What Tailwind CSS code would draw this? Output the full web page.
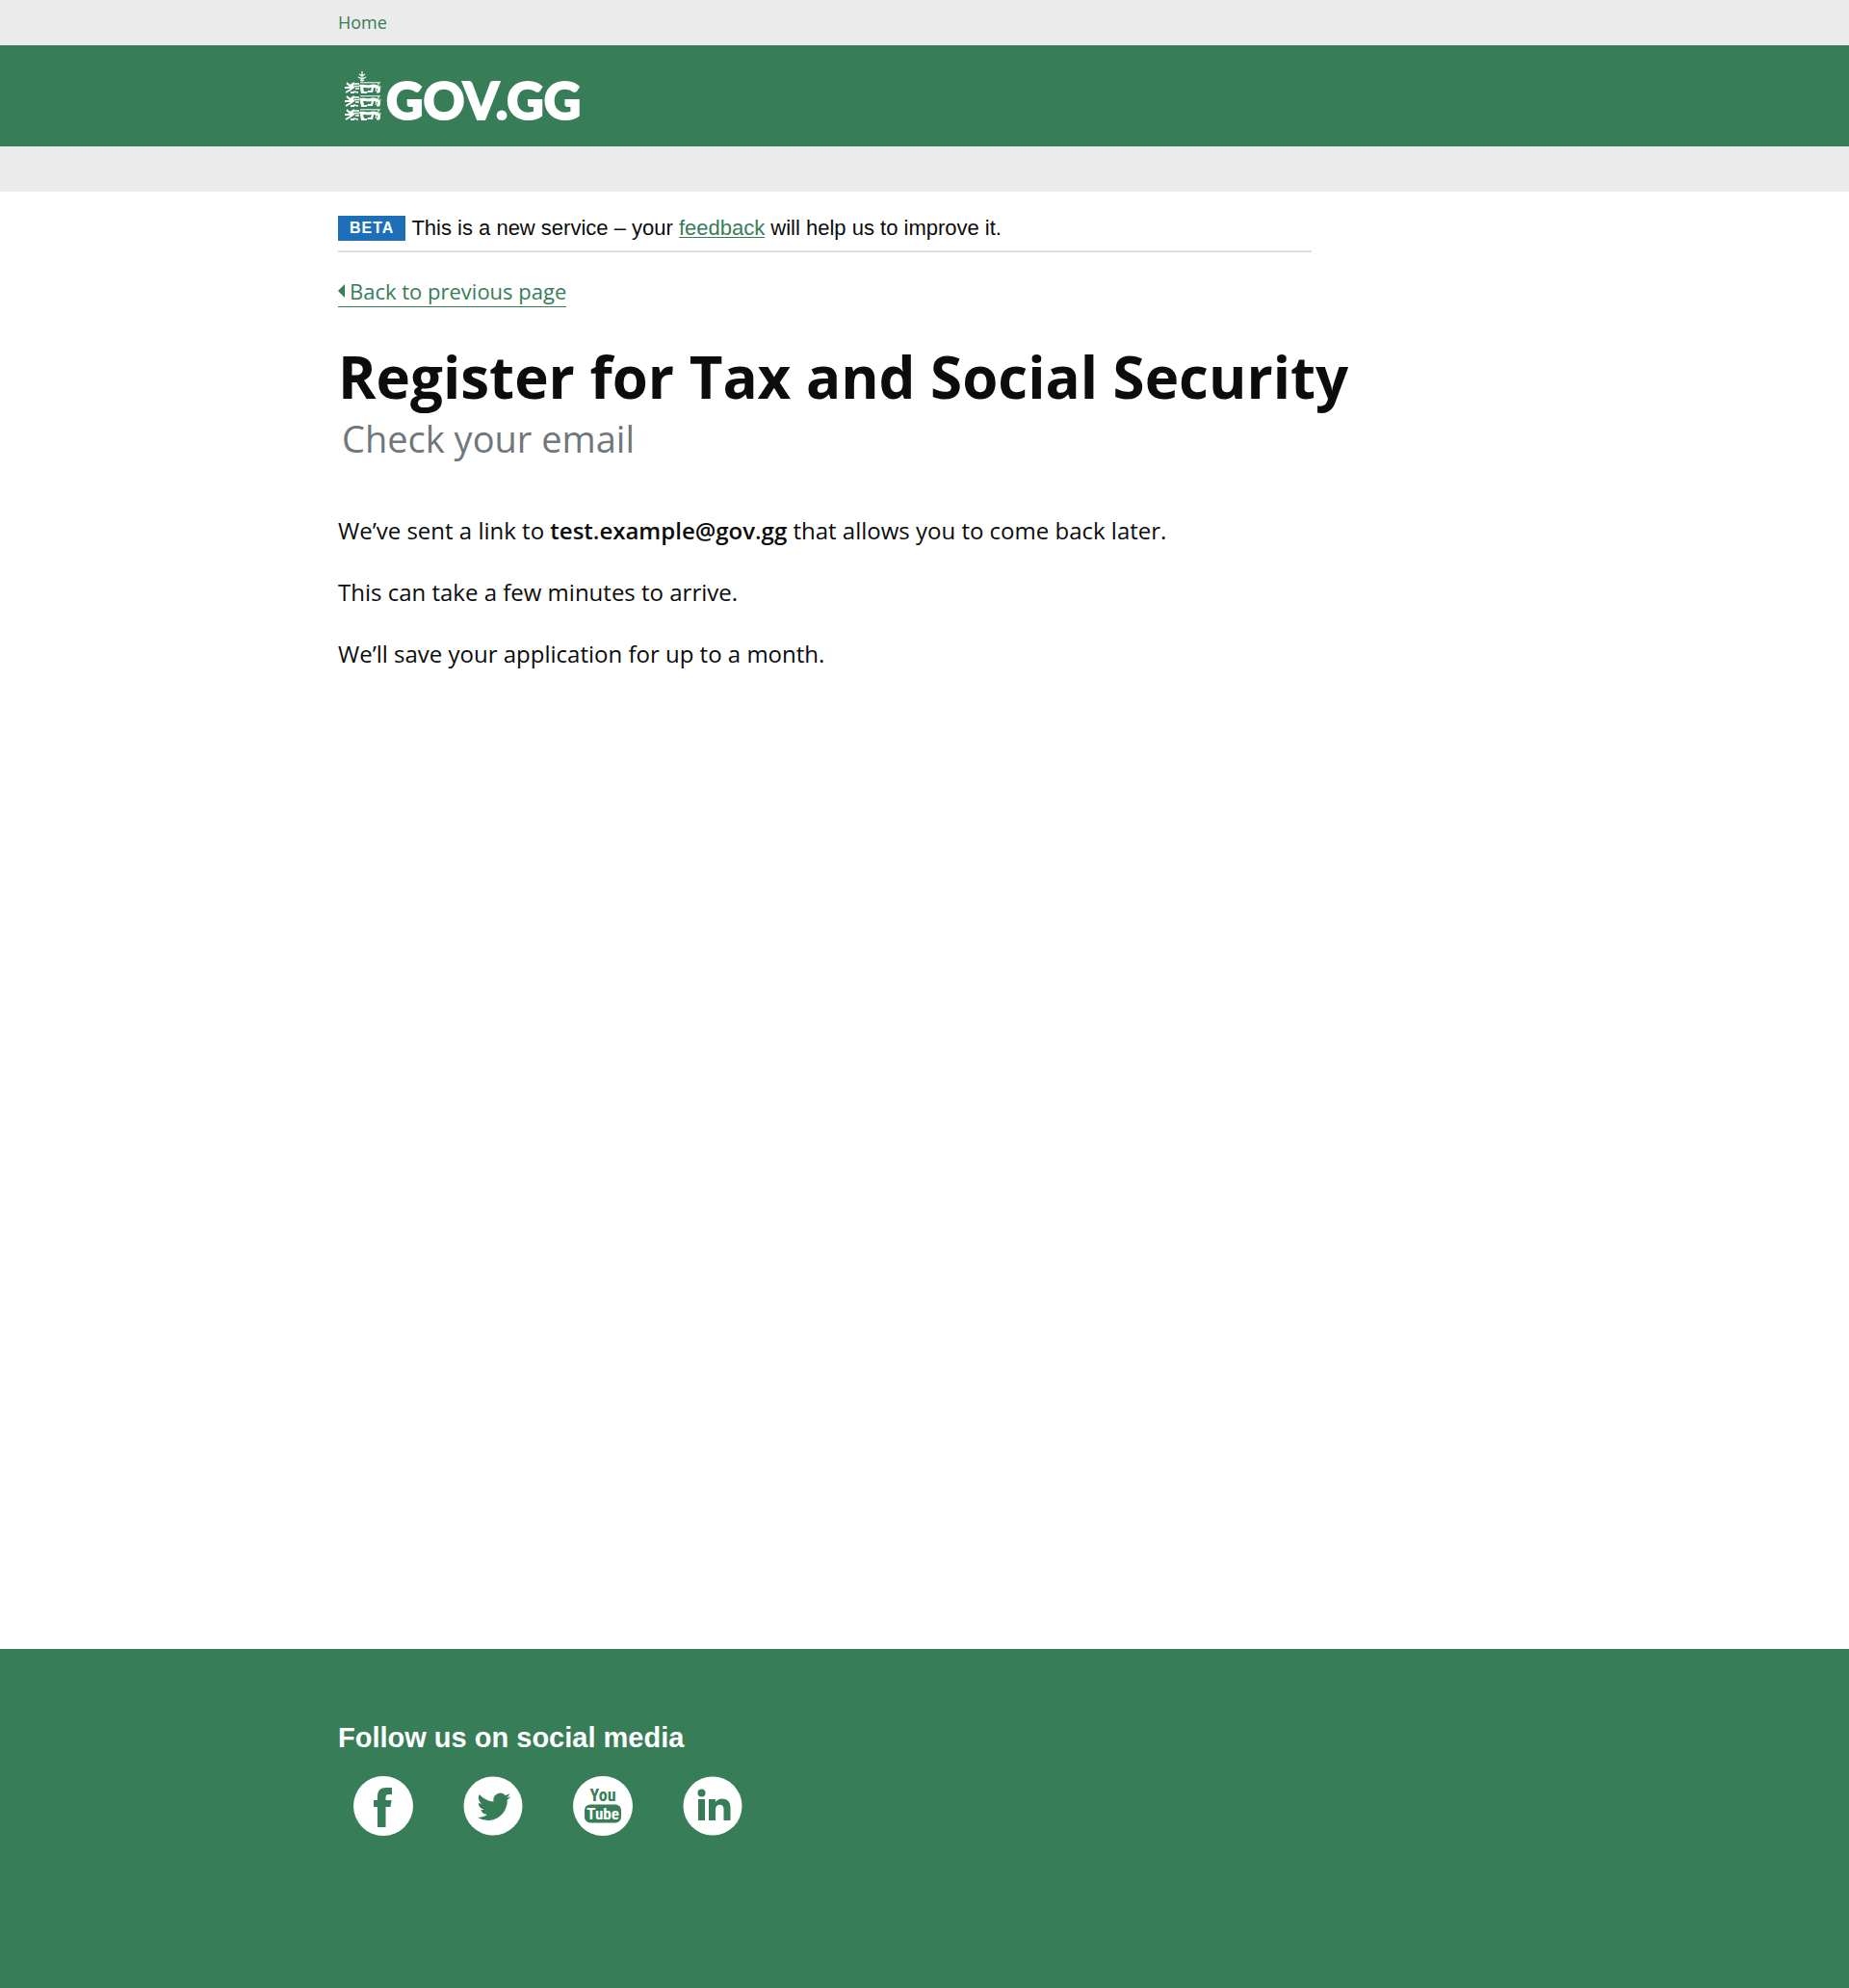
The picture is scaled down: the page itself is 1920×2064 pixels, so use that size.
<!DOCTYPE html>
<html lang="en">
<head>
<meta charset="utf-8">
<meta name="viewport" content="width=device-width, initial-scale=1">
<title>Register for Tax and Social Security</title>
<script src="https://cdn.jsdelivr.net/npm/@tailwindcss/browser@4"></script>
</head>
<body class="min-h-screen flex flex-col bg-white text-[#0b0c0c] font-['Open_Sans',sans-serif]">
  <nav class="bg-[#ebebeb] h-[47px]" aria-label="Breadcrumb">
    <div class="max-w-[1218px] h-full mx-auto flex items-center pb-0.5">
      <a href="#" class="text-lg text-[#377d57]">Home</a>
    </div>
  </nav>
  <header class="bg-[#377d57] h-[105px]">
    <div class="max-w-[1218px] h-full mx-auto flex items-center">
      <a href="#" class="flex items-center pl-[6px] gap-1 text-white" aria-label="GOV.GG">
        <svg class="w-10 h-[54px]" viewBox="0 0 40 54" fill="none" stroke="currentColor" aria-hidden="true">
          <defs>
            <g id="lion">
              <path stroke-width="2" d="M3 1l3 3 5-3M1 6l6 0 3-3M2 11l5-3 4-3M7 11h4"/>
              <path stroke-width="1.4" d="M10 2h6M11 4.500h5M12 7h4M10 10l5 1"/>
              <path stroke-width="1" d="M17 .8h21M36 1v3M38 4l-1 7h-3M34 5l-1 5"/>
              <path fill="currentColor" stroke="none" d="M16 3c5-1 8 1 12 0 4-1 7 0 9 2v6h-3l1-4-4-1-1 5h-6l1-2h3l1-3c-4 1-7 0-9 0l1 4h3v2h-6l-1-6z"/>
            </g>
          </defs>
          <path stroke-width="1.300" d="M19 1v10M16 4l3 2 3-2M15 7l4 2 4-2M17 10l2 1 2-1"/>
          <use href="#lion" y="12"/><use href="#lion" y="26"/><use href="#lion" y="40"/>
        </svg>
        <span class="pt-2 font-['Lato',sans-serif] font-black text-[53px] leading-none [-webkit-text-stroke:2px_white]">GOV.GG</span>
      </a>
    </div>
  </header>
  <div class="bg-[#ebebeb] h-[47px]"></div>
  <main class="w-full max-w-[1218px] mx-auto flex-1 pt-6">
    <div class="max-w-[1011px] border-b-2 border-[#dedede] pb-[9px] flex items-center gap-1.5 font-['Liberation_Sans',sans-serif]">
      <strong class="bg-[#1d70b8] text-white text-base leading-[26px] tracking-[1px] px-3">BETA</strong>
      <p class="text-[22px] leading-7">This is a new service – your <a href="#" class="text-[#377d57] underline underline-offset-2 decoration-1">feedback</a> will help us to improve it.</p>
    </div>
    <a href="#" class="mt-6 inline-flex items-center gap-1 border-b border-[#377d57] text-[#377d57] text-[22px] leading-8">
      <svg class="w-2 h-3.5" viewBox="0 0 8 14" fill="currentColor" aria-hidden="true"><path d="M0 7l7-7v14z"/></svg>
      Back to previous page
    </a>
    <h1 class="mt-8 text-[60px] leading-[80px] font-bold">Register for Tax and Social Security</h1>
    <p class="pl-1 text-[38px] leading-[48px] text-[#6f777b]">Check your email</p>
    <div class="mt-14 flex flex-col gap-8 text-2xl">
      <p>We’ve sent a link to <b class="font-semibold">test.example@gov.gg</b> that allows you to come back later.</p>
      <p>This can take a few minutes to arrive.</p>
      <p>We’ll save your application for up to a month.</p>
    </div>
  </main>
  <footer class="bg-[#377d57] text-white pt-[76px] pb-[158px]">
    <div class="max-w-[1218px] mx-auto">
      <h2 class="font-['Liberation_Sans',sans-serif] font-bold text-[29px] leading-8">Follow us on social media</h2>
      <div class="mt-6 pl-4 flex items-center gap-[52px]">
        <a href="#" aria-label="Facebook"><svg class="w-[62px] h-[62px]" viewBox="0 0 62 62"><circle cx="31" cy="31" r="31" fill="#fff"/><path fill="#377d57" d="M25 53V32h-4v-7h4v-4c0-6 3-9 9-9h6v7h-3.500c-2 0-3 1-3 3v3h6l-1 7h-5v21z"/></svg></a>
        <a href="#" aria-label="Twitter"><svg class="w-[62px] h-[62px]" viewBox="0 0 62 62"><circle cx="31" cy="31" r="30.500" fill="#fff"/><path fill="#377d57" transform="translate(14.500 14.500) scale(1.450)" d="M23.950 4.570a10 10 0 0 1-2.820.77 4.960 4.960 0 0 0 2.160-2.720c-.95.550-2 .95-3.130 1.180a4.920 4.920 0 0 0-8.380 4.480C7.690 8.090 4.070 6.130 1.640 3.160a4.920 4.920 0 0 0 1.520 6.570 4.900 4.900 0 0 1-2.230-.61v.06a4.920 4.920 0 0 0 3.950 4.830 5 5 0 0 1-2.210.08 4.940 4.940 0 0 0 4.600 3.420A9.870 9.870 0 0 1 0 19.540a13.990 13.990 0 0 0 7.550 2.210c9.050 0 14-7.500 14-13.980 0-.21 0-.42-.02-.63a9.940 9.940 0 0 0 2.460-2.550z"/></svg></a>
        <a href="#" aria-label="YouTube"><svg class="w-[62px] h-[62px]" viewBox="0 0 62 62" font-family="'Roboto Condensed','Liberation Sans Narrow','Liberation Sans',sans-serif" font-weight="700" text-anchor="middle"><circle cx="31" cy="31" r="31" fill="#fff"/><rect x="12" y="29.500" width="38" height="19" rx="6" fill="#377d57"/><text x="31" y="26" font-size="18" fill="#377d57">You</text><text x="31" y="45" font-size="17" fill="#fff">Tube</text></svg></a>
        <a href="#" aria-label="LinkedIn"><svg class="w-[62px] h-[62px]" viewBox="0 0 62 62"><circle cx="31" cy="31" r="30.500" fill="#fff"/><g fill="#377d57"><circle cx="19.500" cy="17.500" r="4"/><path d="M16 24h7v22h-7zM27 24h7v3c1.500-2.300 3.800-3.500 7-3.500 5.500 0 8.500 3.500 8.500 9.500v13h-7V34.500c0-3-1.300-4.800-4-4.800s-4.500 1.800-4.500 4.800V46h-7z"/></g></svg></a>
      </div>
    </div>
  </footer>
</body>
</html>
